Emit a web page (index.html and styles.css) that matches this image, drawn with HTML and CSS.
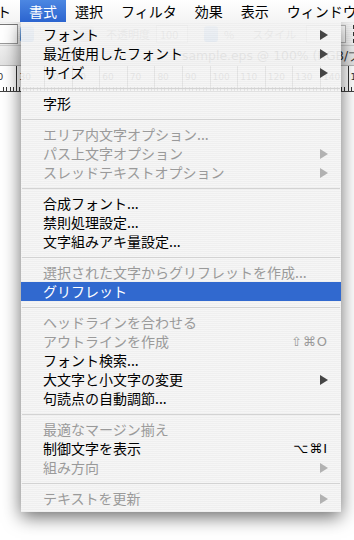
FILE: index.html
```html
<!DOCTYPE html>
<html lang="ja">
<head>
<meta charset="utf-8">
<title>書式メニュー</title>
<link rel="stylesheet" href="styles.css">
</head>
<body>
<div class="screen">
  <div class="menubar">
    <span class="mb-item first">ト</span>
    <span class="mb-item active">書式</span>
    <span class="mb-item">選択</span>
    <span class="mb-item">フィルタ</span>
    <span class="mb-item">効果</span>
    <span class="mb-item">表示</span>
    <span class="mb-item">ウィンドウ</span>
  </div>

  <div class="app">
    <div class="toolbar">
      <div class="field"></div>
      <div class="tb-btn blue"></div>
      <div class="tb-btn small"></div>
      <span class="tb-text opacity">不透明度</span>
      <div class="tb-box">100</div>
      <div class="tb-btn blue mid"></div>
      <span class="tb-text">%</span>
      <span class="tb-text style">スタイル</span>
      <div class="tb-box wide"></div>
      <svg class="grid-icon" width="12" height="20" viewBox="0 0 12 20">
        <rect x="1.5" y="1.5" width="3" height="3" fill="none" stroke="#333"/>
        <rect x="7.5" y="1.5" width="3" height="3" fill="none" stroke="#333"/>
        <rect x="1.5" y="8.5" width="3" height="3" fill="#333" stroke="#333"/>
        <rect x="7.5" y="8.5" width="3" height="3" fill="none" stroke="#333"/>
        <rect x="1.5" y="15.5" width="3" height="3" fill="none" stroke="#333"/>
        <rect x="7.5" y="15.5" width="3" height="3" fill="none" stroke="#333"/>
        <path d="M4.5 3H7.5M4.5 10H7.5M4.5 17H7.5M3 4.5V8.5M9 11.5V15.5" stroke="#333" fill="none"/>
      </svg>
    </div>
    <div class="titlebar">sample.eps @ 100% (RGB/プレビュー)</div>
    <div class="ruler">
      <span class="seg">20</span><span class="seg">30</span><span class="seg">40</span><span class="seg">50</span><span class="seg">60</span><span class="seg">70</span><span class="seg">80</span><span class="seg">90</span><span class="seg">100</span><span class="seg">110</span><span class="seg">120</span><span class="seg">130</span><span class="seg">140</span><span class="seg">150</span>
    </div>
  </div>

  <div class="menu">
    <div class="item"><span class="label">フォント</span><span class="arrow"></span></div>
    <div class="item"><span class="label">最近使用したフォント</span><span class="arrow"></span></div>
    <div class="item"><span class="label">サイズ</span><span class="arrow"></span></div>
    <div class="sep"></div>
    <div class="item"><span class="label">字形</span></div>
    <div class="sep"></div>
    <div class="item dis"><span class="label">エリア内文字オプション...</span></div>
    <div class="item dis"><span class="label">パス上文字オプション</span><span class="arrow"></span></div>
    <div class="item dis"><span class="label">スレッドテキストオプション</span><span class="arrow"></span></div>
    <div class="sep"></div>
    <div class="item"><span class="label">合成フォント...</span></div>
    <div class="item"><span class="label">禁則処理設定...</span></div>
    <div class="item"><span class="label">文字組みアキ量設定...</span></div>
    <div class="sep"></div>
    <div class="item dis"><span class="label">選択された文字からグリフレットを作成...</span></div>
    <div class="item hl"><span class="label">グリフレット</span></div>
    <div class="sep"></div>
    <div class="item dis"><span class="label">ヘッドラインを合わせる</span></div>
    <div class="item dis"><span class="label">アウトラインを作成</span><span class="key">⇧⌘O</span></div>
    <div class="item"><span class="label">フォント検索...</span></div>
    <div class="item"><span class="label">大文字と小文字の変更</span><span class="arrow"></span></div>
    <div class="item"><span class="label">句読点の自動調節...</span></div>
    <div class="sep"></div>
    <div class="item dis"><span class="label">最適なマージン揃え</span></div>
    <div class="item"><span class="label">制御文字を表示</span><span class="key">⌥⌘I</span></div>
    <div class="item dis"><span class="label">組み方向</span><span class="arrow"></span></div>
    <div class="sep"></div>
    <div class="item dis"><span class="label">テキストを更新</span><span class="arrow"></span></div>
  </div>
</div>
</body>
</html>
```

FILE: styles.css
```css
* { box-sizing: border-box; }

html, body {
  margin: 0;
  padding: 0;
}

body {
  width: 354px;
  height: 540px;
  overflow: hidden;
  background: #ffffff;
  font-family: "Noto Sans CJK JP", "Noto Sans", sans-serif;
}

.screen {
  position: relative;
  width: 354px;
  height: 540px;
  overflow: hidden;
  background: #ffffff;
}

/* ---------- menu bar ---------- */
.menubar {
  position: relative;
  z-index: 3;
  height: 22px;
  display: flex;
  white-space: nowrap;
  background: linear-gradient(#ffffff, #f4f4f4);
  font-size: 14px;
  line-height: 22px;
  color: #000;
}

.mb-item {
  padding: 0 9px;
  flex: none;
}

.mb-item.first {
  padding-left: 0;
  margin-left: -3px;
}

.mb-item.active {
  background: linear-gradient(#4c87e2, #2b64cf);
  color: #ffffff;
}

/* ---------- application behind the menu ---------- */
.app {
  display: flex;
  flex-direction: column;
}

.toolbar {
  height: 24px;
  display: flex;
  align-items: center;
  gap: 6px;
  background: repeating-linear-gradient(to bottom, #efefef 0 1px, #f6f6f6 1px 2px);
  border-bottom: 1px solid #cfcfcf;
  font-size: 11px;
  color: #777;
  white-space: nowrap;
}

.field {
  flex: none;
  width: 38px;
  height: 20px;
  margin-left: -20px;
  background: #fff;
  border: 1px solid #9a9a9a;
  border-top-color: #777;
}

.tb-btn {
  flex: none;
  width: 14px;
  height: 16px;
  border-radius: 3px;
  background: linear-gradient(#d8d8d8, #b8b8b8);
}

.tb-btn.blue {
  background: linear-gradient(#9cc3f2, #4d8fe0);
  margin-left: -4px;
}

.tb-btn.small { margin-left: 40px; }
.tb-btn.mid { margin-left: 10px; }

.tb-text.opacity { margin-left: 6px; }
.tb-text.style { margin-left: 12px; }

.tb-box {
  flex: none;
  width: 32px;
  height: 18px;
  padding-left: 3px;
  line-height: 16px;
  background: #fff;
  border: 1px solid #b8b8b8;
}

.tb-box.wide {
  width: 40px;
  margin-left: 4px;
}

.grid-icon {
  flex: none;
  margin-left: auto;
  margin-right: 1px;
}

.titlebar {
  height: 20px;
  padding-left: 182px;
  background: linear-gradient(#efefef, #e2e2e2);
  border-bottom: 1px solid #b8b8b8;
  font-family: "DejaVu Sans", sans-serif;
  font-size: 12.4px;
  line-height: 19px;
  color: #333;
  white-space: nowrap;
  overflow: hidden;
}

.ruler {
  height: 26px;
  display: flex;
  align-items: stretch;
  margin-left: -11.2px;
  background: #fff;
  border-bottom: 1px solid #444;
}

.seg {
  flex: none;
  width: 27.6px;
  padding: 6px 0 0 2px;
  font-family: "DejaVu Sans", sans-serif;
  font-size: 9px;
  line-height: 10px;
  color: #333;
  border-left: 1px solid #333;
  background:
    repeating-linear-gradient(to right, transparent 0 2.45px, #333 2.45px 3.45px) bottom left / 100% 4px no-repeat;
}

/* ---------- the open menu ---------- */
.menu {
  position: absolute;
  z-index: 2;
  left: 21px;
  top: 22px;
  width: 320px;
  padding: 3px 0 4px;
  background: repeating-linear-gradient(to bottom,
      rgba(245, 245, 245, 0.92) 0 1px,
      rgba(238, 238, 238, 0.92) 1px 2px);
  box-shadow: 0 5px 17px rgba(0, 0, 0, 0.58);
  font-size: 14px;
  color: #000;
}

.item {
  display: flex;
  align-items: center;
  height: 19px;
  padding: 0 13px 0 22px;
  line-height: 19px;
  white-space: nowrap;
}

.item.dis { color: #9a9a9a; }

.item.hl {
  background: #3169cf;
  color: #ffffff;
}

.label {
  flex: 1;
}

.arrow {
  flex: none;
  width: 0;
  height: 0;
  border-left: 8px solid #454545;
  border-top: 5px solid transparent;
  border-bottom: 5px solid transparent;
}

.dis .arrow { border-left-color: #b2b2b2; }

.key {
  flex: none;
  font-family: "DejaVu Sans", sans-serif;
  font-size: 13px;
  letter-spacing: 1px;
}

.sep {
  height: 12px;
  display: flex;
  align-items: center;
  padding: 0 1px;
}

.sep::before {
  content: "";
  flex: 1;
  height: 1px;
  background: #d3d3d3;
}
```
